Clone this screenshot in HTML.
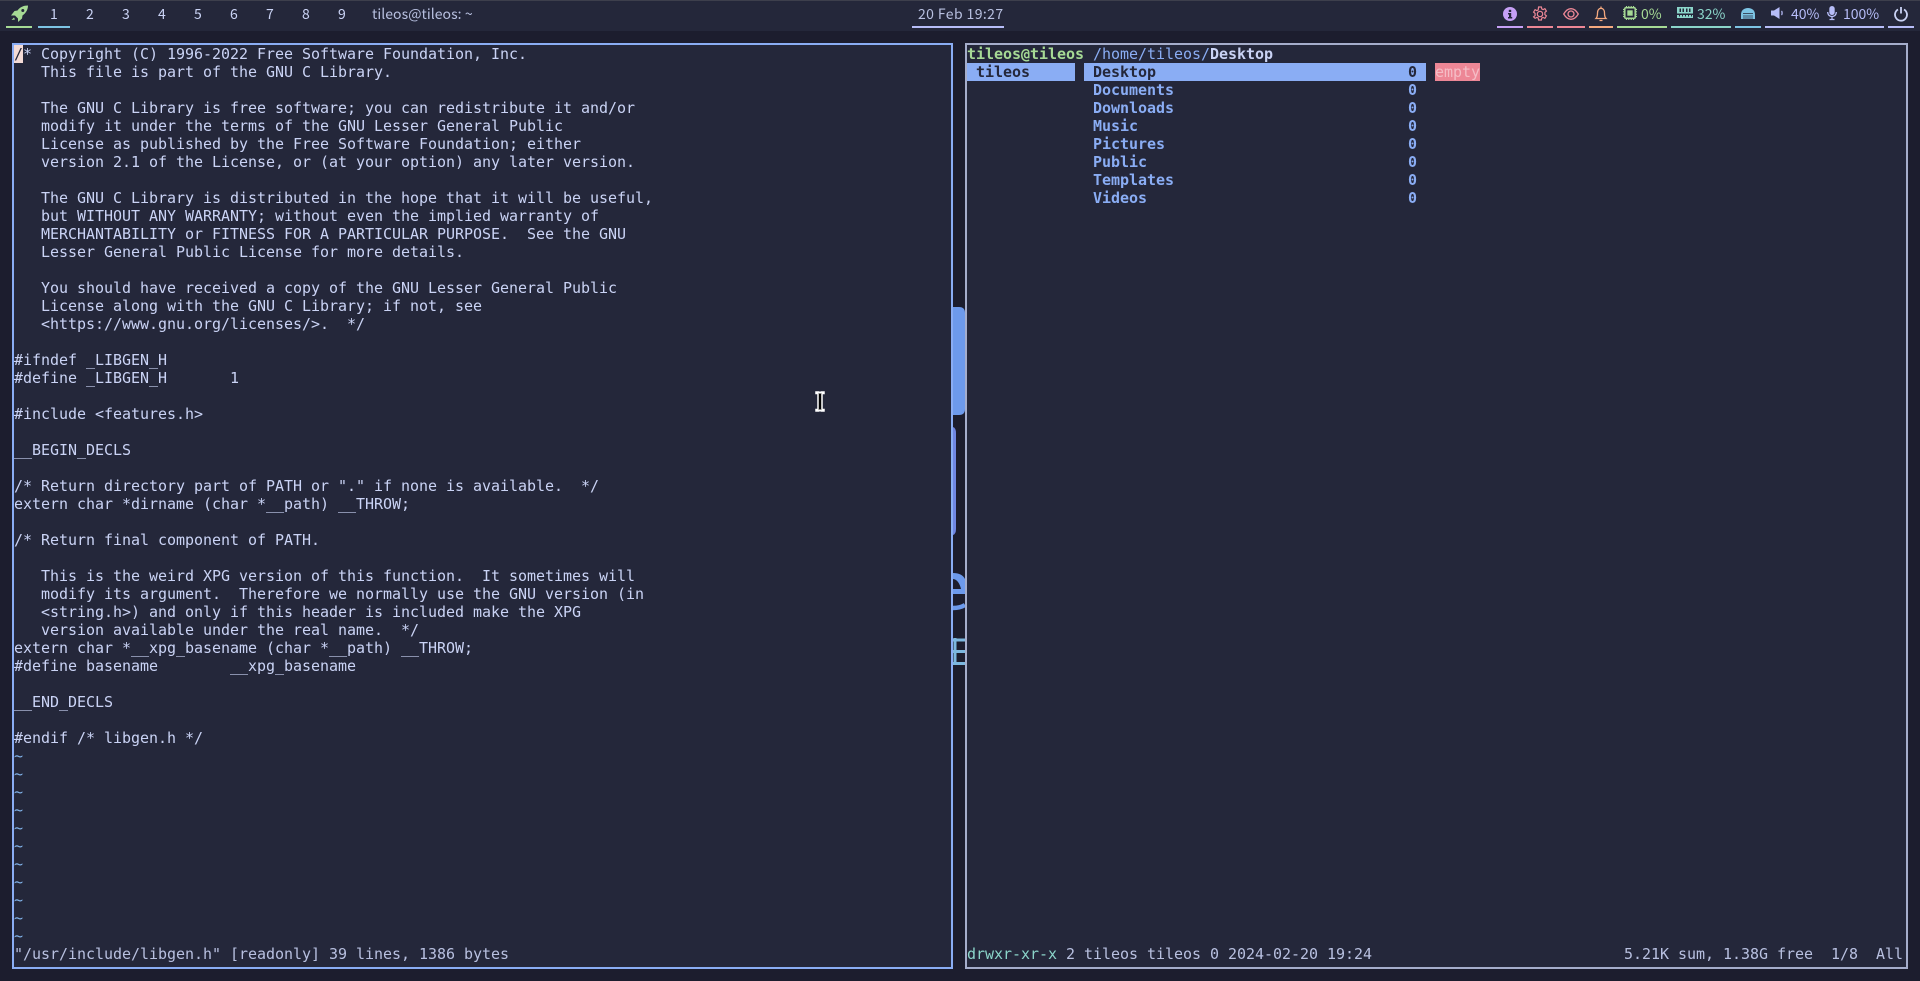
<!DOCTYPE html>
<html><head><meta charset="utf-8"><style>
html,body{margin:0;padding:0;width:1920px;height:981px;overflow:hidden;background:#1c1d2e}
*{box-sizing:border-box}
.a{position:absolute}
#bar{left:0;top:0;width:1920px;height:31px;background:#24273a;border-top:1px solid #3d3f4c}
.u{position:absolute;top:26px;height:2px}
.t{position:absolute;top:4px;font:14px/20px "Noto Sans CJK SC","Liberation Sans",sans-serif;white-space:nowrap;color:#cad3f5}
.win{position:absolute;top:43px;height:926px;background:#24273a;border:2px solid #8aadf4}
pre{position:absolute;margin:0;font:15px/18px "DejaVu Sans Mono",monospace;letter-spacing:-0.03px;color:#cad3f5;white-space:pre}
b{font-weight:bold}
svg{position:absolute;overflow:visible}
</style></head><body>
<div class="a" id="bar"></div>
<svg style="left:9px;top:5px" width="20" height="18" viewBox="0 0 20 18"><path d="M19 .5c-4.500 0-8 1.500-10.500 5l-3 .5L2 10.500h4l3 3v3.500l4-3.500.5-3C17 8 19 4.500 19 .5z" fill="#a6da95"/><path d="M5 12.500L2.500 15l3.500-.5z" fill="#a6da95"/><circle cx="13.800" cy="5.500" r="1.500" fill="#24273a"/></svg>
<div class="u" style="left:6px;width:26px;background:#a6da95"></div>
<div class="u" style="left:38px;width:32px;background:#7dc4e4"></div>
<div class="t" style="left:50px">1</div><div class="t" style="left:86px">2</div><div class="t" style="left:122px">3</div><div class="t" style="left:158px">4</div><div class="t" style="left:194px">5</div><div class="t" style="left:230px">6</div><div class="t" style="left:266px">7</div><div class="t" style="left:302px">8</div><div class="t" style="left:338px">9</div>
<div class="t" style="left:372px;color:#b8c0e0;letter-spacing:.05px">tileos@tileos: ~</div>
<div class="t" style="left:918px;color:#b8c0e0;letter-spacing:.4px">20 Feb 19:27</div>
<div class="u" style="left:912px;width:92px;background:#b7bdf8"></div>

<div class="u" style="left:1497px;width:26px;background:#c6a0f6"></div>
<div class="u" style="left:1527px;width:26px;background:#ed8796"></div>
<div class="u" style="left:1557px;width:28px;background:#ed8796"></div>
<div class="u" style="left:1589px;width:24px;background:#f5a97f"></div>
<div class="u" style="left:1617px;width:50px;background:#a6da95"></div>
<div class="u" style="left:1671px;width:60px;background:#8bd5ca"></div>
<div class="u" style="left:1735px;width:26px;background:#7dc4e4"></div>
<div class="u" style="left:1765px;width:119px;background:#b7bdf8"></div>
<div class="u" style="left:1888px;width:26px;background:#b7bdf8"></div>

<svg style="left:1503px;top:7px" width="14" height="14" viewBox="0 0 14 14"><circle cx="7" cy="7" r="7" fill="#c6a0f6"/><rect x="5.800" y="2.800" width="2.400" height="2.200" fill="#24273a"/><path d="M5 6h3.200v4h1v1.500H5V10h1V7.500H5z" fill="#24273a"/></svg>
<svg style="left:1533px;top:7px" width="14" height="14" viewBox="0 0 14 14" fill="none" stroke="#ed8796" stroke-width="1.200"><circle cx="7" cy="7" r="2.700"/><path d="M5.600 0h2.800l.4 2 1.300.6 1.800-.9 1.500 2.400-1.500 1.300v2.200l1.500 1.300-1.500 2.400-1.800-.9-1.300.6-.4 2.000H5.600l-.4-2-1.300-.6-1.800.9L.6 9.900l1.500-1.300V6.400L.6 5.100l1.500-2.400 1.800.9 1.300-.6z"/></svg>
<svg style="left:1563px;top:8px" width="16" height="12" viewBox="0 0 16 12" fill="none" stroke="#ed8796" stroke-width="1.300"><path d="M.7 6C3 2.200 5.500.7 8 .7S13 2.200 15.300 6C13 9.800 10.500 11.300 8 11.300S3 9.800.7 6z"/><circle cx="8" cy="6" r="3"/></svg>
<svg style="left:1595px;top:6px" width="12" height="16" viewBox="0 0 12 16" fill="none" stroke="#f5a97f" stroke-width="1.300"><path d="M6 .5v1.500M1 12.500c1-1 1.500-2 1.500-5.500C2.500 4 4 2.300 6 2.300S9.500 4 9.500 7c0 3.500.5 4.500 1.500 5.500zM4.500 14.500h3"/></svg>
<svg style="left:1623px;top:6px" width="14" height="14" viewBox="0 0 14 14"><rect x="1.800" y="1.800" width="10.400" height="10.400" rx="1" fill="none" stroke="#a6da95" stroke-width="1.500"/><rect x="4.300" y="4.300" width="5.400" height="5.400" fill="#a6da95"/><path d="M3.500 0v2M5.800 0v2M8.200 0v2M10.500 0v2M3.500 12v2M5.800 12v2M8.200 12v2M10.500 12v2M0 3.500h2M0 5.800h2M0 8.200h2M0 10.500h2M12 3.500h2M12 5.800h2M12 8.200h2M12 10.500h2" stroke="#a6da95" stroke-width="1.200"/></svg>
<div class="t" style="left:1641px;color:#a6da95">0%</div>
<svg style="left:1677px;top:7px" width="16" height="11" viewBox="0 0 16 11"><path d="M0 0h16v6.500H0z" fill="#8bd5ca"/><path d="M2.500 1.500h1.500v3.500H2.500zM5.500 1.500H7v3.500H5.500zM9 1.500h1.500v3.500H9zM12 1.500h1.500v3.500H12z" fill="#24273a"/><path d="M0 8h16v3H0z" fill="#8bd5ca"/><path d="M2 8h1v1.500H2zM5 8h1v1.500H5zM8 8h1v1.500H8zM11 8h1v1.500h-1zM14 8h1v1.500h-1z" fill="#24273a"/></svg>
<div class="t" style="left:1697px;color:#8bd5ca">32%</div>
<svg style="left:1741px;top:8px" width="14" height="11" viewBox="0 0 14 11"><path d="M0 11V6.500C0 2.500 3 0 7 0s7 2.500 7 6.500V11z" fill="#7dc4e4"/><path d="M2 5.500h10M3 7v4M5 7v4M7 7v4M9 7v4M11 7v4" stroke="#24273a" stroke-width=".7"/></svg>
<svg style="left:1771px;top:7px" width="13" height="12" viewBox="0 0 13 12"><path d="M0 3.500h3L8.500 0v12L3 8.500H0z" fill="#b7bdf8"/><path d="M10.500 4c.8.700.8 3.300 0 4" fill="none" stroke="#b7bdf8" stroke-width="1.300"/></svg>
<div class="t" style="left:1791px;color:#b7bdf8">40%</div>
<svg style="left:1827px;top:6px" width="10" height="14" viewBox="0 0 10 14"><rect x="2.300" y="0" width="5.400" height="9" rx="2.700" fill="#b7bdf8"/><path d="M.7 6c0 6 8.600 6 8.600 0M5 10.500V14M2.500 13.500h5" fill="none" stroke="#b7bdf8" stroke-width="1.300"/></svg>
<div class="t" style="left:1843px;color:#b7bdf8">100%</div>
<svg style="left:1894px;top:7px" width="14" height="14" viewBox="0 0 14 14" fill="none" stroke="#cad3f5" stroke-width="1.800"><path d="M4 2.500a6 6 0 1 0 6 0M7 0v6.500"/></svg>

<!-- wallpaper slivers -->
<svg style="left:953px;top:300px" width="12" height="380" viewBox="953 300 12 380">
<path d="M953 307h6q6 0 6 6v96q0 6-6 6h-6z" fill="#6d9aec"/>
<path d="M953 427q3 1 3 6v96q0 5-3 6z" fill="#6f86e2"/>
<path d="M953 573c6 0 10 2 12 6v15h-12v-5h8c-1-5-4-10-8-10z" fill="#6d9aec"/>
<path d="M953 608q7 0 12-3" fill="none" stroke="#6d9aec" stroke-width="4.500"/>
<path d="M955 638v27M953 640h12M953 651.500h12M953 663.500h12" fill="none" stroke="#7cb7df" stroke-width="3"/>
</svg>

<div class="win" style="left:12px;width:941px"></div>
<pre style="left:14px;top:45px"><span style="background:#f4dbd6;color:#24273a">/</span>* Copyright (C) 1996-2022 Free Software Foundation, Inc.
   This file is part of the GNU C Library.

   The GNU C Library is free software; you can redistribute it and/or
   modify it under the terms of the GNU Lesser General Public
   License as published by the Free Software Foundation; either
   version 2.1 of the License, or (at your option) any later version.

   The GNU C Library is distributed in the hope that it will be useful,
   but WITHOUT ANY WARRANTY; without even the implied warranty of
   MERCHANTABILITY or FITNESS FOR A PARTICULAR PURPOSE.  See the GNU
   Lesser General Public License for more details.

   You should have received a copy of the GNU Lesser General Public
   License along with the GNU C Library; if not, see
   &lt;https://www.gnu.org/licenses/&gt;.  */

#ifndef _LIBGEN_H
#define _LIBGEN_H       1

#include &lt;features.h&gt;

__BEGIN_DECLS

/* Return directory part of PATH or "." if none is available.  */
extern char *dirname (char *__path) __THROW;

/* Return final component of PATH.

   This is the weird XPG version of this function.  It sometimes will
   modify its argument.  Therefore we normally use the GNU version (in
   &lt;string.h&gt;) and only if this header is included make the XPG
   version available under the real name.  */
extern char *__xpg_basename (char *__path) __THROW;
#define basename        __xpg_basename

__END_DECLS

#endif /* libgen.h */
<span style="color:#82b4ec">~
~
~
~
~
~
~
~
~
~
~</span>
<span style="color:#b8c0e0">"/usr/include/libgen.h" [readonly] 39 lines, 1386 bytes</span></pre>

<div class="win" style="left:965px;width:943px;border-color:#a5adcb"></div>
<div class="a" style="left:967px;top:63px;width:108px;height:18px;background:#8aadf4"></div>
<div class="a" style="left:1084px;top:63px;width:342px;height:18px;background:#8aadf4"></div>
<div class="a" style="left:1435px;top:63px;width:45px;height:18px;background:#ed8796"></div>
<pre style="left:967px;top:45px"><b style="color:#a6da95">tileos@tileos</b> <span style="color:#8aadf4">/home/tileos/</span><b>Desktop</b>
<b style="color:#24273a"> tileos</b>       <b style="color:#24273a">Desktop</b></pre>
<pre style="left:1408px;top:63px"><b style="color:#24273a">0</b></pre>
<pre style="left:1435px;top:63px;color:#f5bdc6">empty</pre>
<pre style="left:1093px;top:81px;color:#8aadf4;font-weight:bold">Documents
Downloads
Music
Pictures
Public
Templates
Videos</pre>
<pre style="left:1408px;top:81px;color:#8aadf4;font-weight:bold">0
0
0
0
0
0
0</pre>
<pre style="left:967px;top:945px;color:#b8c0e0"><span style="color:#8bd5ca">drwxr-xr-x</span> 2 tileos tileos 0 2024-02-20 19:24</pre>
<pre style="left:1624px;top:945px;color:#b8c0e0">5.21K sum, 1.38G free  1/8  All</pre>

<svg style="left:814px;top:390px" width="12" height="23" viewBox="0 0 12 23"><path d="M2 2h3l1 1 1-1h3v1.500H8V19.500h2V21H7l-1-1-1 1H2v-1.500h2V3.500H2z" fill="#000" stroke="#fff" stroke-width="1.500"/></svg>
</body></html>
